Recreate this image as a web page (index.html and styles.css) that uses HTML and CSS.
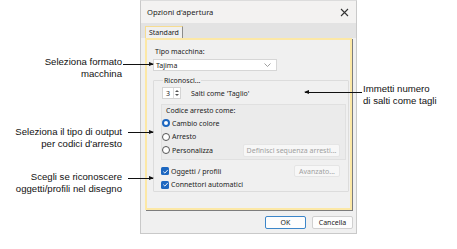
FILE: index.html
```html
<!DOCTYPE html>
<html>
<head>
<meta charset="utf-8">
<link rel="stylesheet" href="styles.css">
</head>
<body>
<div class="stage">
  <div class="dialog">
    <div class="titlebar">
      <span class="title">Opzioni d'apertura</span>
      <svg class="close" width="9" height="9" viewBox="0 0 9 9"><path d="M1 1L8 8M8 1L1 8" stroke="#333" stroke-width="1.1"/></svg>
    </div>
    <div class="tabstrip"><div class="tab">Standard</div></div>
    <div class="panel">
      <div class="label">Tipo macchina:</div>
      <div class="combo"><span>Tajima</span>
        <svg width="7" height="4" viewBox="0 0 7 4"><path d="M0.5 0.5L3.5 3.5L6.5 0.5" fill="none" stroke="#888" stroke-width="0.8"/></svg>
      </div>
      <fieldset class="outer">
        <legend>Riconosci...</legend>
        <div class="row spinrow">
          <div class="spin"><span class="num">3</span>
            <span class="arrows">
              <svg width="6" height="10" viewBox="0 0 6 10"><path d="M1 4L3 2L5 4Z M1 6L3 8L5 6Z" fill="#555"/></svg>
            </span>
          </div>
          <span class="spinlabel">Salti come 'Taglio'</span>
        </div>
        <div class="inner">
          <div class="gtitle">Codice arresto come:</div>
          <div class="radio r1 on"><span class="dot"></span>Cambio colore</div>
          <div class="radio r2"><span class="dot"></span>Arresto</div>
          <div class="row radiorow">
            <div class="radio"><span class="dot"></span>Personalizza</div>
            <div class="btn disabled wide">Definisci sequenza arresti...</div>
          </div>
        </div>
        <div class="row checkrow">
          <div class="check"><span class="box"><svg width="7" height="7" viewBox="0 0 7 7"><path d="M1.3 3.6L2.9 5.1L5.8 1.9" fill="none" stroke="#fff" stroke-width="0.9"/></svg></span>Oggetti / profili</div>
          <div class="btn disabled small">Avanzato...</div>
        </div>
        <div class="check c2"><span class="box"><svg width="7" height="7" viewBox="0 0 7 7"><path d="M1.3 3.6L2.9 5.1L5.8 1.9" fill="none" stroke="#fff" stroke-width="0.9"/></svg></span>Connettori automatici</div>
      </fieldset>
    </div>
    <div class="footer">
      <div class="btn primary">OK</div>
      <div class="btn">Cancella</div>
    </div>
  </div>

  <div class="note left n1">Seleziona formato<br>macchina</div>
  <div class="note left n2">Seleziona il tipo di output<br>per codici d'arresto</div>
  <div class="note left n3">Scegli se riconoscere<br>oggetti/profili nel disegno</div>
  <div class="note right n4">Immetti numero<br>di salti come tagli</div>

  <div class="line l1"></div>
  <div class="line l2"></div>
  <div class="line l3"></div>
  <div class="line l4"></div>
</div>
</body>
</html>
```
FILE: styles.css
```css
* { box-sizing: border-box; }
html, body { margin: 0; padding: 0; background: #fff; }
body { width: 457px; height: 249px; overflow: hidden; font-family: "Noto Sans", "Open Sans", sans-serif; }
.stage { position: relative; width: 457px; height: 249px; }

.dialog {
  margin-left: 140px;
  width: 217px;
  height: 234px;
  background: #f0f0f0;
  border: 1px solid #c9c9c9;
  border-top-color: #dcdcdc;
  display: flex;
  flex-direction: column;
}
.titlebar {
  height: 22px;
  flex: none;
  background: #f3f2f1;
  display: flex;
  align-items: center;
  justify-content: space-between;
  padding: 0 7px 0 6px;
  font-size: 7.6px;
  color: #222;
}
.tabstrip {
  height: 15px;
  flex: none;
  background: #e3e3e3;
  padding-left: 4px;
  display: flex;
  align-items: flex-end;
}
.tab {
  height: 12px;
  width: 38px;
  background: #f0f0f0;
  border-left: 1px solid #f6dc91;
  border-top: 1px solid #f6dc91;
  border-right: 1px solid #8c8c8c;
  font-size: 7px;
  color: #222;
  padding: 0 0 0 3px;
  line-height: 11px;
}
.panel {
  flex: none;
  margin: 0 4px 0 4px;
  width: 207px;
  height: 172px;
  border: 2px solid #fce8a6;
  box-shadow: 1px 1px 0 #7d7d7d;
  background: #f0f0f0;
  padding: 7px 1px 0 6px;
  font-size: 7px;
  color: #222;
}
.label { height: 10px; line-height: 10px; margin-left: 2px; }
.combo {
  margin-top: 2px;
  width: 124px;
  height: 12px;
  background: #fff;
  border: 1px solid #d6d6d6;
  display: flex;
  align-items: center;
  justify-content: space-between;
  padding: 0 5px 0 2px;
}
.outer {
  margin: 5px 0 0 0;
  border: 1px solid #dcdcdc;
  border-radius: 1px;
  padding: 0 2px 0 7px;
  height: 116px;
}
.outer legend { padding: 0 1px; line-height: 9px; margin-left: 2px; }
.row { display: flex; align-items: center; }
.spinrow { height: 14px; margin-top: 1px; }
.spin {
  margin-left: 1px;
  width: 19px; height: 12px;
  background: #fff;
  border: 1px solid #d4d4d4;
  display: flex;
  align-items: center;
  justify-content: space-between;
  padding-left: 3px;
}
.arrows { width: 7px; height: 10px; display: flex; align-items: center; border-left: 1px solid #ddd; }
.spinlabel { margin-left: 10px; }
.inner {
  margin-top: 4px;
  background: #ebebeb;
  border: 1px solid #e0e0e0;
  padding: 1px 5px 2px 0;
  height: 56px;
}
.gtitle { line-height: 9px; height: 9px; margin-left: 4px; }
.radio { display: flex; align-items: center; height: 13px; }
.r1 { margin-top: 1px; height: 14px; }
.radiorow { height: 14px; justify-content: space-between; }
.dot {
  width: 8px; height: 8px; border-radius: 50%;
  border: 1px solid #555;
  margin-right: 2px;
  background: #fff;
}
.radio.on .dot { border: 2.3px solid #1d67c0; background: #fff; }
.btn {
  height: 13px;
  border: 1px solid #d0d0d0;
  border-radius: 2px;
  background: #fdfdfd;
  display: flex;
  align-items: center;
  justify-content: center;
  font-size: 7px;
  color: #222;
}
.btn.disabled { color: #a0a0a0; background: #f7f7f7; border-color: #e5e5e5; }
.wide { width: 97px; }
.small { width: 46px; height: 12px; }
.checkrow { justify-content: space-between; padding-right: 6px; margin-top: 4px; height: 14px; }
.check { display: flex; align-items: center; height: 14px; }
.c2 { height: 13px; }
.box {
  width: 8px; height: 8px; border-radius: 1.5px;
  background: #1d67c0;
  display: flex; align-items: center; justify-content: center;
  margin-right: 2px;
}
.footer {
  display: flex;
  justify-content: flex-end;
  gap: 6px;
  padding: 6px 3px 0 0;
}
.footer .btn { width: 41px; height: 13px; }
.btn.primary { border-color: #3c86c9; }

.note {
  position: absolute;
  font-family: "Liberation Sans", Arial, sans-serif;
  font-size: 9.6px;
  line-height: 12px;
  color: #111;
}
.note.left { text-align: right; right: 335px; }
.n1 { top: 56px; }
.n2 { top: 126px; }
.n3 { top: 171px; }
.n4 { left: 363px; top: 83px; }
.line { position: absolute; height: 1px; background: #111; }
.line::after {
  content: "";
  position: absolute;
  top: -2px;
  border-top: 2.5px solid transparent;
  border-bottom: 2.5px solid transparent;
}
.l1 { left: 123px; width: 30px; top: 64px; }
.l2 { left: 128px; width: 25px; top: 132px; }
.l3 { left: 128px; width: 25px; top: 178px; }
.l1::after, .l2::after, .l3::after { right: -1px; border-left: 5px solid #111; }
.l4 { left: 305px; width: 57px; top: 92px; }
.l4::after { left: -1px; border-right: 5px solid #111; }
```
